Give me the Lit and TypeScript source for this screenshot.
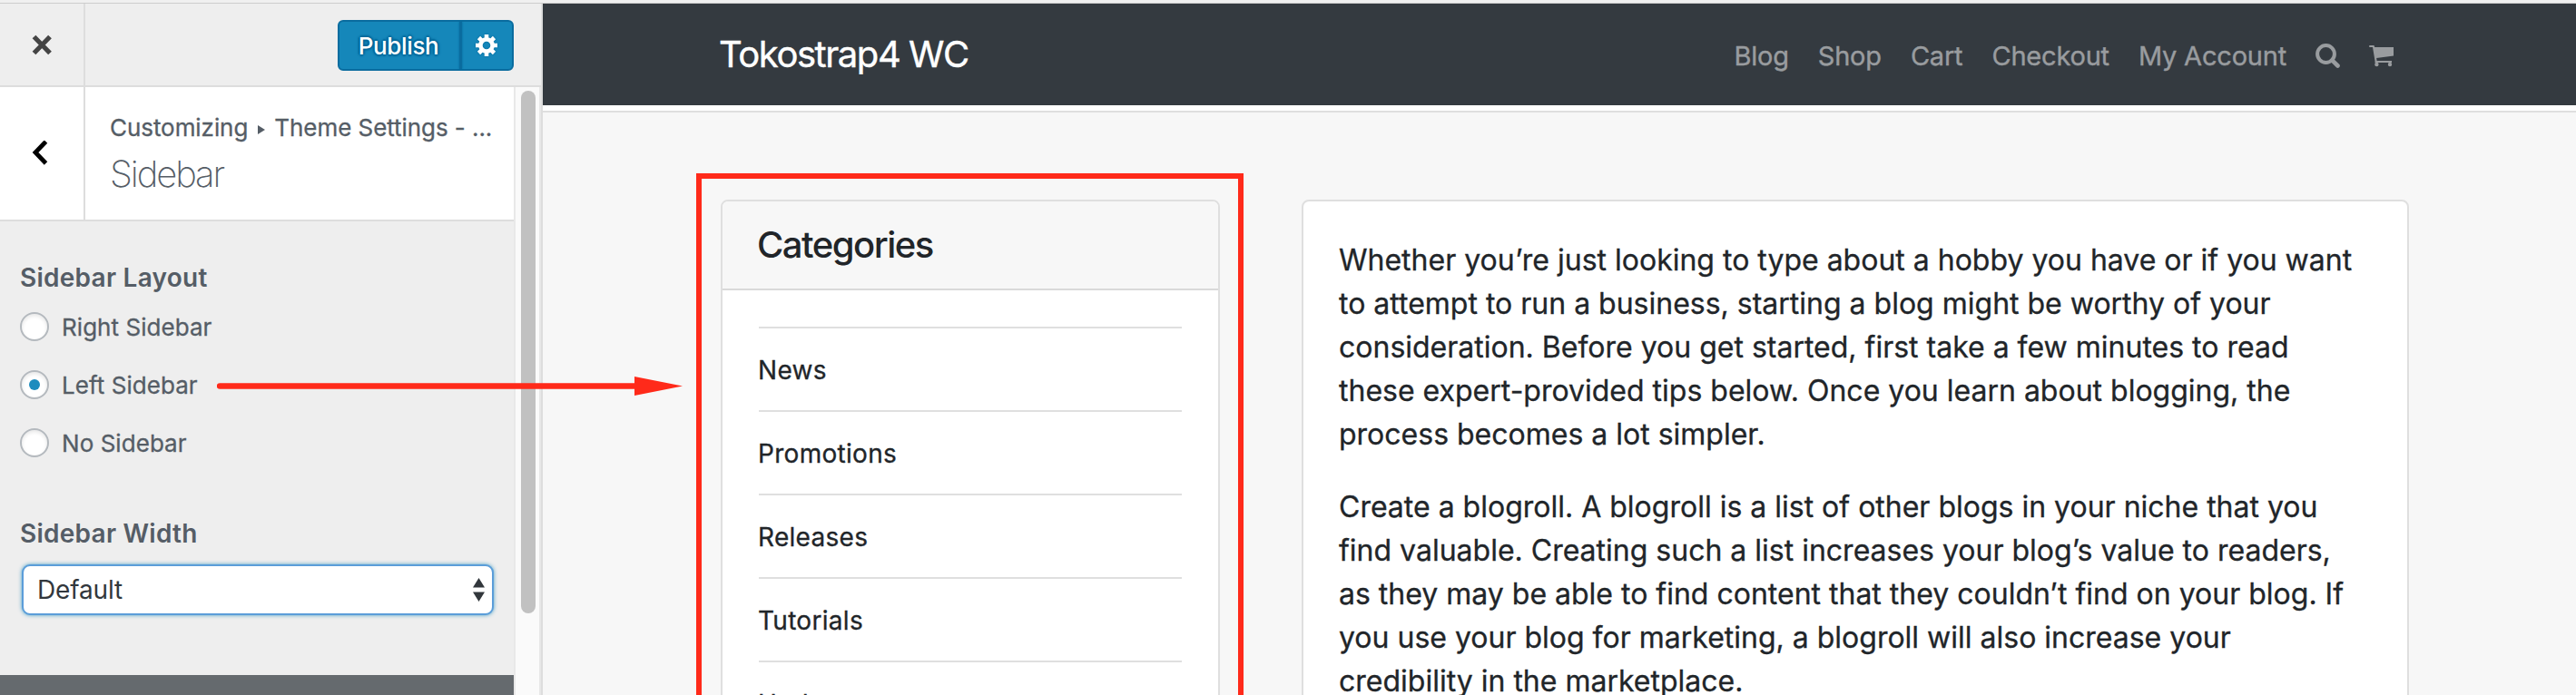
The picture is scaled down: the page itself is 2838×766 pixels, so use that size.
import { LitElement, html, css } from 'lit';

const NAV_LINKS = ['Blog', 'Shop', 'Cart', 'Checkout', 'My Account'];
const CATEGORIES = ['News', 'Promotions', 'Releases', 'Tutorials', 'Updates'];
const LAYOUTS = ['Right Sidebar', 'Left Sidebar', 'No Sidebar'];

const PARAGRAPHS = [
  [
    'Whether you’re just looking to type about a hobby you have or if you want',
    'to attempt to run a business, starting a blog might be worthy of your',
    'consideration. Before you get started, first take a few minutes to read',
    'these expert-provided tips below. Once you learn about blogging, the',
    'process becomes a lot simpler.',
  ],
  [
    'Create a blogroll. A blogroll is a list of other blogs in your niche that you',
    'find valuable. Creating such a list increases your blog’s value to readers,',
    'as they may be able to find content that they couldn’t find on your blog. If',
    'you use your blog for marketing, a blogroll will also increase your',
    'credibility in the marketplace.',
  ],
];

export class CustomizerPanel extends LitElement {
  static properties = {
    layout: { type: String },
  };

  layout = 'Left Sidebar';

  static styles = css`
    :host {
      display: flex;
      flex-direction: column;
      box-sizing: border-box;
      width: 598px;
      height: 762px;
      border-right: 2px solid #ddd;
      background: #eee;
      color: #555d66;
      font-size: 26px;
    }
    * {
      box-sizing: border-box;
    }
    button {
      border: 0;
      padding: 0;
      background: none;
      font: inherit;
    }
    svg {
      display: block;
    }
    .top {
      display: flex;
      height: 92px;
      border-bottom: 2px solid #ddd;
    }
    .cell {
      display: flex;
      align-items: center;
      padding-left: 35px;
      width: 94px;
      flex: none;
      border-right: 2px solid #ddd;
    }
    .actions {
      display: flex;
      margin: 18px 30px 0 auto;
      height: 56px;
      border: 2px solid #0a6c9f;
      border-radius: 6px;
      background: #1587ba;
      color: #fff;
    }
    .publish {
      width: 132px;
      padding-right: 2px;
      color: #fff;
      font-weight: 500;
      letter-spacing: -0.35px;
      text-shadow: 0 -2px 2px #006799, 2px 0 2px #006799, 0 2px 2px #006799, -2px 0 2px #006799;
    }
    .gear {
      display: flex;
      align-items: center;
      justify-content: center;
      width: 58px;
      padding-right: 2px;
      border-left: 3px solid #0a6c9f;
      filter: drop-shadow(0 0 1px #006799);
    }
    .body {
      display: flex;
      flex: 1;
      min-height: 0;
    }
    .content {
      display: flex;
      flex-direction: column;
      width: 566px;
    }
    .title {
      display: flex;
      height: 148px;
      border-bottom: 2px solid #ddd;
      background: #fff;
    }
    .heading {
      padding: 28px 0 0 27px;
      white-space: nowrap;
    }
    .crumbs {
      line-height: 34px;
      letter-spacing: -0.06px;
      -webkit-text-stroke: 0.3px;
    }
    .crumbs svg {
      display: inline-block;
      margin: 0 10px 2px 11px;
    }
    h3 {
      margin: 9px 0 0;
      font-size: 40px;
      font-weight: 200;
      line-height: 50px;
      letter-spacing: -2.1px;
    }
    .controls {
      flex: 1;
      padding: 44px 22px 0;
    }
    .label {
      font-size: 28px;
      font-weight: 600;
      line-height: 36px;
      letter-spacing: 0.25px;
    }
    .choices {
      display: grid;
      row-gap: 32px;
      margin: 20px 0 66px;
    }
    .choice {
      display: flex;
      align-items: center;
      gap: 14px;
      height: 32px;
      letter-spacing: 0.05px;
      -webkit-text-stroke: 0.3px;
    }
    .radio {
      display: flex;
      align-items: center;
      justify-content: center;
      width: 32px;
      height: 32px;
      border: 2px solid #b4b9be;
      border-radius: 50%;
      background: #fff;
      box-shadow: inset 0 2px 4px rgba(0, 0, 0, 0.1);
    }
    .dot {
      width: 12px;
      height: 12px;
      border-radius: 50%;
      background: #1e8cbe;
    }
    .select {
      display: flex;
      align-items: center;
      justify-content: space-between;
      margin: 16px 0 0 2px;
      padding: 0 8px 0 15px;
      width: 520px;
      height: 56px;
      border: 2px solid #5b9dd9;
      border-radius: 9px;
      background: #fff;
      box-shadow: 0 0 4px rgba(30, 140, 190, 0.8);
      color: #32373c;
      font-size: 28px;
      letter-spacing: -0.15px;
    }
    .footer {
      height: 22px;
      background: #656a6e;
    }
    .track {
      flex: 1;
      padding: 4px 4px 0 6px;
      border: solid #e8e8e8;
      border-width: 0 2px;
      background: #fafafa;
    }
    .thumb {
      width: 16px;
      height: 576px;
      border-radius: 8px;
      background: #c1c1c1;
    }
  `;

  render() {
    return html`
      <div class="top">
        <button class="cell" aria-label="Close">
          <svg width="23" height="23" viewBox="0 0 23 23">
            <path d="M2.5 2.5 20 20.5M20 2.5 2.5 20.5" stroke="#444" stroke-width="5.2" />
          </svg>
        </button>
        <div class="actions">
          <button class="publish">Publish</button>
          <span class="gear">
            <svg width="24" height="24" viewBox="0 0 24 24" fill="none" stroke="#fff">
              <circle cx="12" cy="12" r="6.6" stroke-width="4.6" />
              <path
                d="M12 0v5M12 19v5M0 12h5M19 12h5M3.5 3.5 7 7M17 17l3.5 3.5M3.5 20.5 7 17M17 7l3.5-3.5"
                stroke-width="4.6"
              />
            </svg>
          </span>
        </div>
      </div>
      <div class="body">
        <div class="content">
          <div class="title">
            <button class="cell" aria-label="Back">
              <svg width="18" height="28" viewBox="0 0 18 28">
                <path d="M15.5 1 4 13l11.5 12" fill="none" stroke="#000" stroke-width="4.8" />
              </svg>
            </button>
            <div class="heading">
              <div class="crumbs">
                Customizing<svg width="8" height="10" viewBox="0 0 8 10">
                  <path d="M0 0 8 5 0 10z" fill="#555d66" /></svg
                >Theme Settings - ...
              </div>
              <h3>Sidebar</h3>
            </div>
          </div>
          <div class="controls">
            <div class="label">Sidebar Layout</div>
            <div class="choices" role="radiogroup">
              ${LAYOUTS.map(
                (name) => html`<div class="choice" @click=${() => (this.layout = name)}>
                  <span class="radio">
                    ${name === this.layout ? html`<span class="dot"></span>` : ''}
                  </span>
                  ${name}
                </div>`,
              )}
            </div>
            <div class="label">Sidebar Width</div>
            <div class="select">
              Default
              <svg width="13" height="26" viewBox="0 0 13 26" fill="#32373c">
                <path d="M0 10.5 6.5 0 13 10.5zM0 15.5h13L6.5 26z" />
              </svg>
            </div>
          </div>
          <div class="footer"></div>
        </div>
        <div class="track"><div class="thumb"></div></div>
      </div>
    `;
  }
}

export class SitePreview extends LitElement {
  static styles = css`
    :host {
      display: flex;
      flex-direction: column;
      flex: 1;
      height: 762px;
      overflow: hidden;
      background: #f7f7f7;
      color: #212529;
    }
    * {
      box-sizing: border-box;
    }
    .navbar {
      display: flex;
      align-items: center;
      justify-content: space-between;
      flex: none;
      height: 112px;
      padding: 0 201px 0 194px;
      background: #343a40;
    }
    .brand {
      margin-top: -1px;
      color: #fff;
      font-size: 40px;
      letter-spacing: -1.45px;
      -webkit-text-stroke: 0.4px;
    }
    nav {
      display: flex;
      align-items: center;
      gap: 32px;
      padding-top: 3px;
      color: #999c9f;
      font-size: 29px;
      letter-spacing: -0.2px;
      -webkit-text-stroke: 0.4px;
    }
    .strip {
      flex: none;
      height: 8px;
      border-bottom: 2px solid #dfdfdf;
      background: #fff;
    }
    .columns {
      display: flex;
      align-items: flex-start;
      gap: 90px;
      padding: 96px 0 0 196px;
    }
    .card {
      border: 2px solid #dfdfdf;
      border-radius: 8px;
      background: #fff;
    }
    .widget {
      width: 550px;
    }
    h4 {
      margin: 0;
      height: 98px;
      padding-left: 38px;
      border-bottom: 2px solid #d9d9d9;
      border-radius: 6px 6px 0 0;
      background: #f7f7f7;
      font-size: 40px;
      font-weight: 500;
      line-height: 96px;
      letter-spacing: -1.5px;
    }
    ul {
      margin: 0;
      padding: 40px 40px 0;
      list-style: none;
    }
    li {
      height: 92px;
      border-top: 2px solid #dfdfdf;
      font-size: 28px;
      line-height: 92px;
      letter-spacing: 0.3px;
      text-indent: -1px;
      -webkit-text-stroke: 0.3px;
    }
    .article {
      width: 1220px;
      padding: 41px 0 40px 39px;
      font-size: 32px;
      line-height: 48px;
      white-space: nowrap;
      -webkit-text-stroke: 0.3px;
    }
    p {
      margin: 0 0 32px;
      white-space: pre-line;
    }
  `;

  render() {
    return html`
      <div class="navbar">
        <div class="brand">Tokostrap4 WC</div>
        <nav>
          ${NAV_LINKS.map((link) => html`<span>${link}</span>`)}
          <svg width="27" height="27" viewBox="0 0 27 27" fill="none" stroke="#999c9f">
            <circle cx="11.5" cy="11.5" r="9.4" stroke-width="4" />
            <path d="m18.3 18.3 6.2 6.2" stroke-width="4.6" stroke-linecap="round" />
          </svg>
          <svg width="27" height="24" viewBox="0 0 27 24" fill="#999c9f">
            <path
              d="M1 0H5.5L6.2 2H27V11.5L8.2 14 8.6 17H25V19H6.5V17L4 2H1Q0 2 0 1T1 0z"
            />
            <circle cx="8.4" cy="21" r="2.2" />
            <circle cx="23" cy="21" r="2.2" />
          </svg>
        </nav>
      </div>
      <div class="strip"></div>
      <div class="columns">
        <section class="card widget">
          <h4>Categories</h4>
          <ul>
            ${CATEGORIES.map((name) => html`<li>${name}</li>`)}
          </ul>
        </section>
        <article class="card article">
          ${PARAGRAPHS.map((lines) => html`<p>${lines.join('\n')}</p>`)}
        </article>
      </div>
    `;
  }
}

export class AppRoot extends LitElement {
  static styles = css`
    :host {
      display: flex;
      position: relative;
      box-sizing: border-box;
      height: 766px;
      padding-top: 3px;
      overflow: hidden;
      background: #f0f0f0;
      font-family: Inter, 'Liberation Sans', sans-serif;
    }
    .window {
      display: flex;
      flex: 1;
      border-top: 1px solid #ccc;
    }
    /* annotations drawn over the page */
    .frame {
      position: absolute;
      left: 767px;
      top: 191px;
      box-sizing: border-box;
      width: 603px;
      height: 620px;
      border: 6px solid #ff2a1a;
    }
    .arrow {
      position: absolute;
      left: 239px;
      top: 413px;
    }
  `;

  render() {
    return html`
      <div class="window">
        <customizer-panel></customizer-panel>
        <site-preview></site-preview>
      </div>
      <div class="frame"></div>
      <svg class="arrow" width="514" height="26" viewBox="0 0 514 26">
        <path d="M3 12.5H465" stroke="#ff2a1a" stroke-width="6.5" stroke-linecap="round" />
        <path d="M460 2 513 12.5 460 23z" fill="#ff2a1a" />
      </svg>
    `;
  }
}

customElements.define('customizer-panel', CustomizerPanel);
customElements.define('site-preview', SitePreview);
customElements.define('app-root', AppRoot);
